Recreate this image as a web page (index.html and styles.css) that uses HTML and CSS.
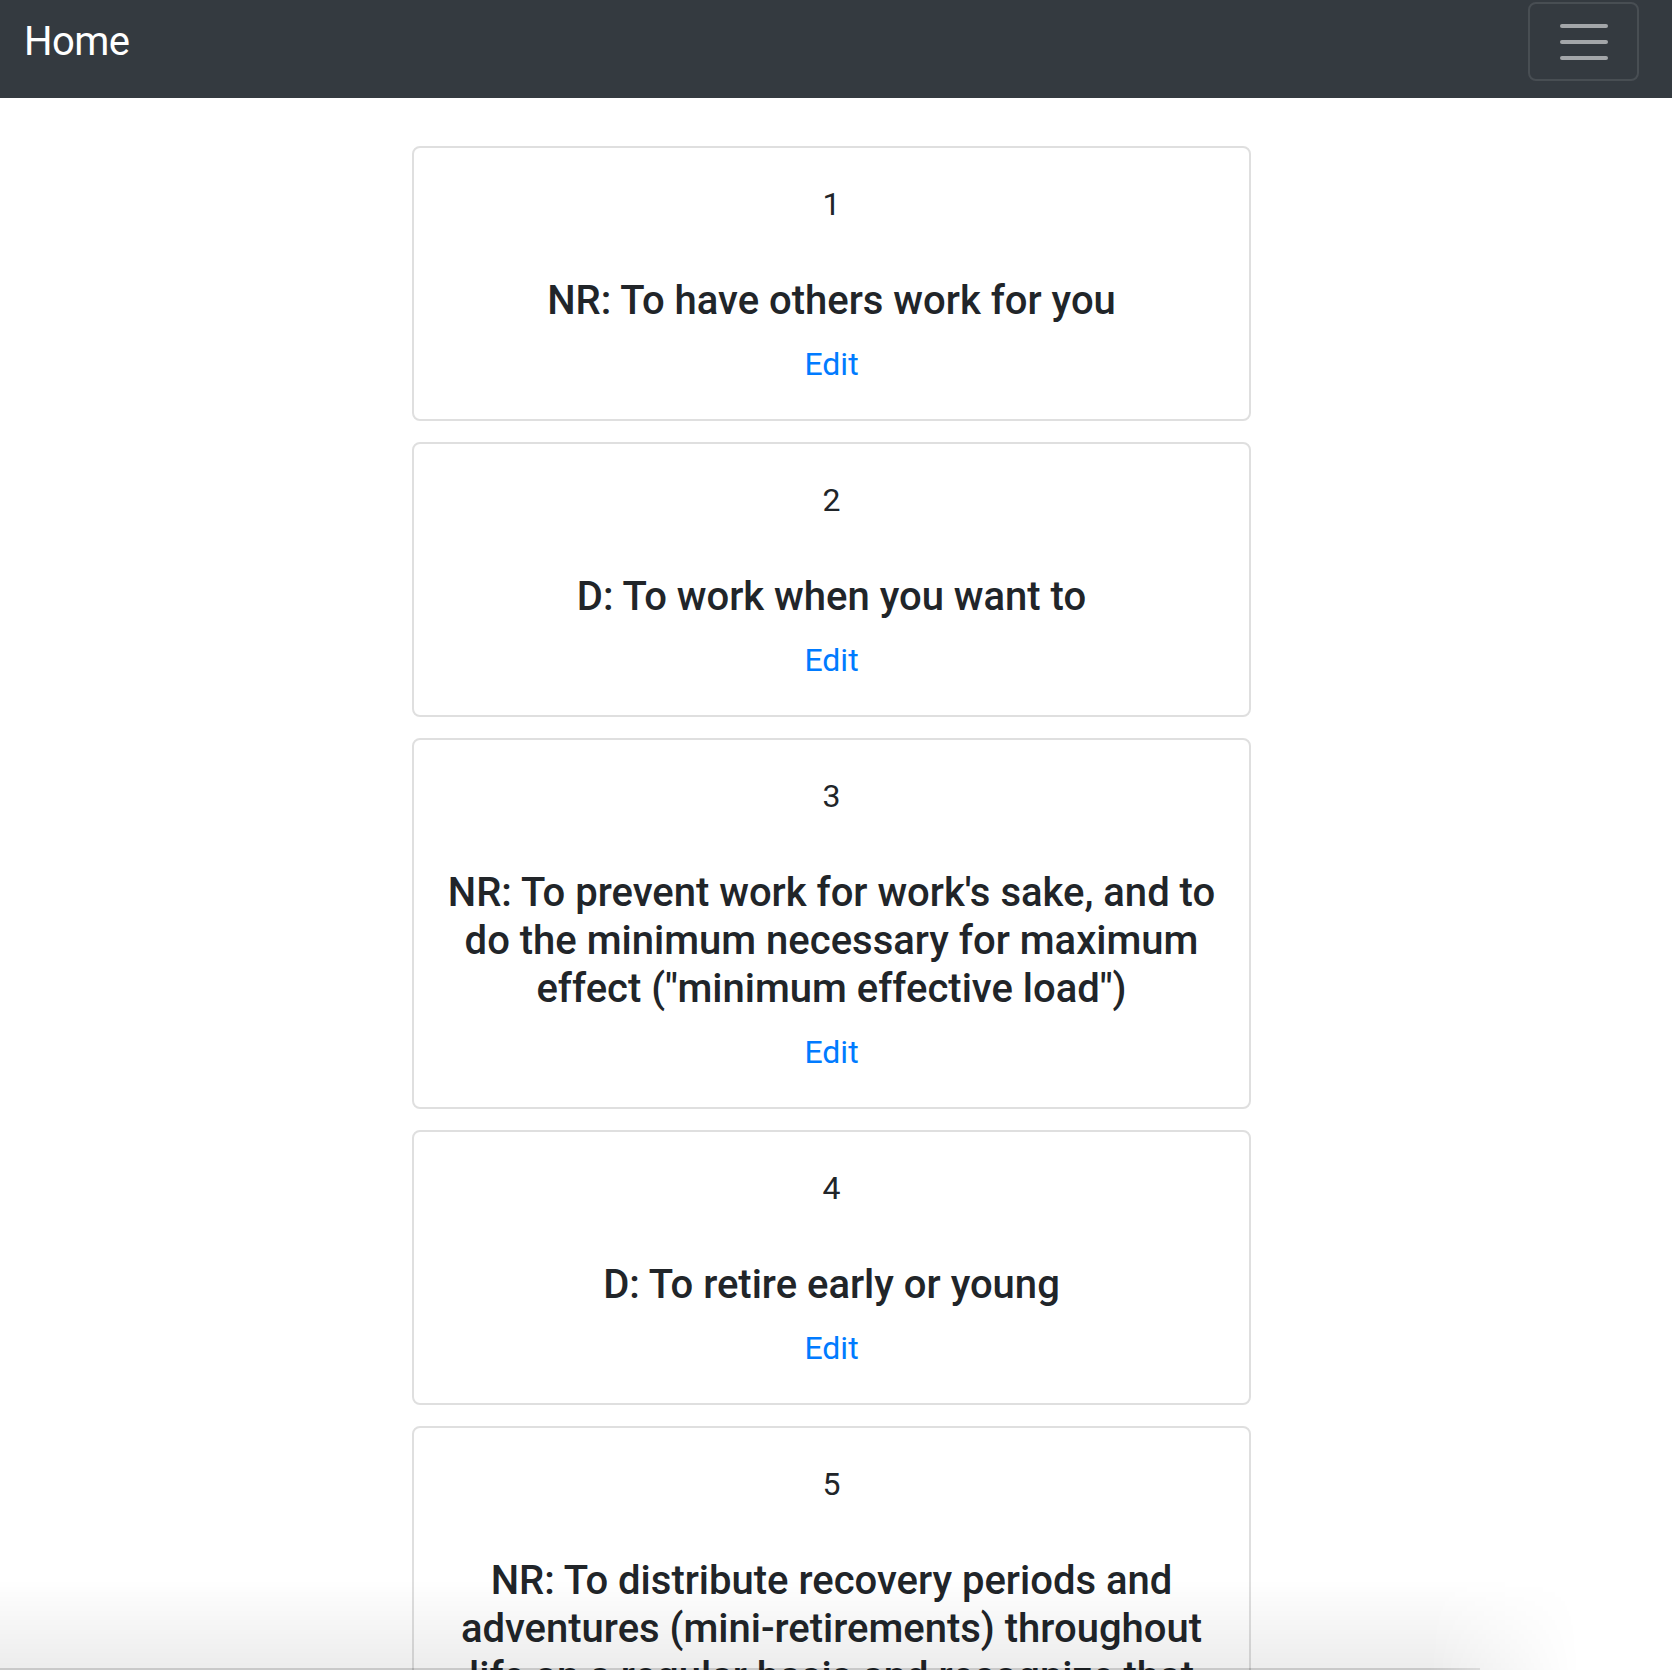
FILE: index.html
```html
<!DOCTYPE html>
<html lang="en">
<head>
<meta charset="utf-8">
<title>Home</title>
<link rel="stylesheet" href="styles.css">
</head>
<body>
<nav class="navbar">
  <a class="brand" href="#">Home</a>
  <button class="toggler" type="button" aria-label="Toggle navigation">
    <span class="bar"></span>
    <span class="bar"></span>
    <span class="bar"></span>
  </button>
</nav>
<main class="list">
  <div class="card">
    <p class="num">1</p>
    <h5 class="title">NR: To have others work for you</h5>
    <a class="edit" href="#">Edit</a>
  </div>
  <div class="card">
    <p class="num">2</p>
    <h5 class="title">D: To work when you want to</h5>
    <a class="edit" href="#">Edit</a>
  </div>
  <div class="card">
    <p class="num">3</p>
    <h5 class="title">NR: To prevent work for work's sake, and to do the minimum necessary for maximum effect ("minimum effective load")</h5>
    <a class="edit" href="#">Edit</a>
  </div>
  <div class="card">
    <p class="num">4</p>
    <h5 class="title">D: To retire early or young</h5>
    <a class="edit" href="#">Edit</a>
  </div>
  <div class="card">
    <p class="num">5</p>
    <h5 class="title">NR: To distribute recovery periods and adventures (mini-retirements) throughout life on a regular basis and recognize that inactivity is not the goal. Doing that which excites you is.</h5>
    <a class="edit" href="#">Edit</a>
  </div>
</main>
<div class="bottom-fade"></div>
</body>
</html>
```
FILE: styles.css
```css
html, body {
  margin: 0;
  padding: 0;
  background: #fff;
}
body {
  font-family: Roboto, "Noto Sans", "Liberation Sans", sans-serif;
  color: #212529;
  font-size: 32px;
  line-height: 48px;
}
.navbar {
  box-sizing: border-box;
  height: 98px;
  background: #343a40;
  display: flex;
  justify-content: space-between;
  align-items: flex-start;
  padding: 2px 33px 0 24px;
}
.brand {
  color: #fff;
  text-decoration: none;
  font-size: 40px;
  line-height: 79px;
  font-weight: 400;
  letter-spacing: -0.6px;
}
.toggler {
  box-sizing: border-box;
  width: 111px;
  height: 79px;
  background: transparent;
  border: 2px solid rgba(255, 255, 255, 0.1);
  border-radius: 8px;
  display: flex;
  flex-direction: column;
  align-items: center;
  justify-content: center;
  gap: 12px;
  padding: 0;
}
.bar {
  display: block;
  width: 48px;
  height: 4px;
  border-radius: 2px;
  background: rgba(255, 255, 255, 0.55);
}
.list {
  width: 839px;
  margin: 48px 0 0 calc(50% - 424px);
  display: flex;
  flex-direction: column;
  gap: 21px;
}
.card {
  box-sizing: border-box;
  border: 2px solid #dfdfdf;
  border-radius: 8px;
  padding: 32px 32px 31px;
  text-align: center;
}
.num {
  margin: 0 0 49px;
}
.title {
  margin: 0 0 15px;
  font-size: 40px;
  line-height: 48px;
  font-weight: 500;
}
.edit {
  color: #007bff;
  text-decoration: none;
  display: block;
}
.bottom-fade {
  position: fixed;
  left: 0;
  right: 0;
  bottom: 0;
  height: 90px;
  background: linear-gradient(to bottom, rgba(0, 0, 0, 0), rgba(0, 0, 0, 0.075));
  -webkit-mask-image: linear-gradient(to right, #000 1430px, transparent 1580px);
  mask-image: linear-gradient(to right, #000 1430px, transparent 1580px);
  pointer-events: none;
}
.bottom-fade::after {
  content: "";
  position: absolute;
  left: 0;
  bottom: 0;
  width: 1480px;
  height: 2px;
  background: rgba(0, 0, 0, 0.15);
}
```
